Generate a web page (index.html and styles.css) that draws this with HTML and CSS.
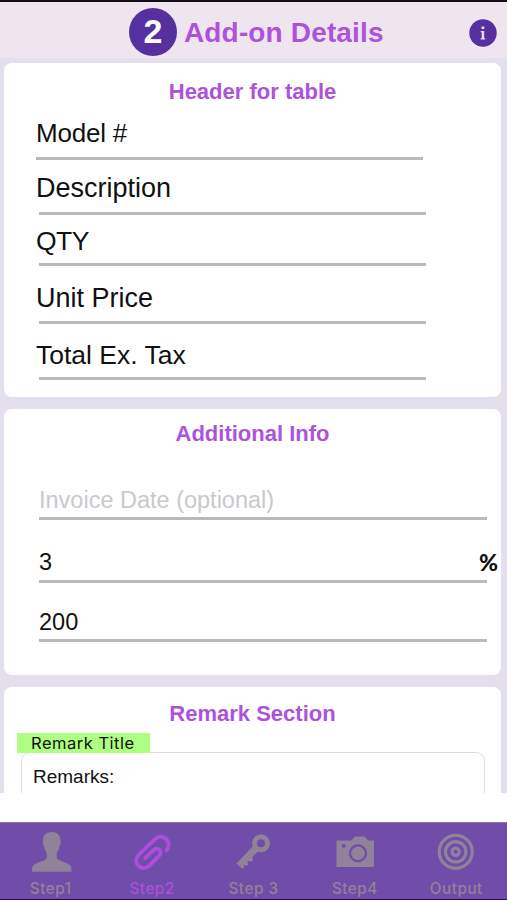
FILE: index.html
```html
<!DOCTYPE html>
<html lang="en">
<head>
<meta charset="utf-8">
<title>Add-on Details</title>
<link rel="stylesheet" href="styles.css">
</head>
<body>
<header class="header">
  <div class="heading"><span class="step-number">2</span><h1>Add-on Details</h1></div>
  <svg class="info" viewBox="0 0 28 28"><circle cx="14" cy="14" r="13.700" fill="#55309e"/><path d="M12.500 7.500h2.800v2.600h-2.800zM11.700 12h3.500v7.300h1v1.200h-4.600v-1.200h1.100v-6h-1z" fill="#e9dcf1"/></svg>
</header>
<main class="content">
  <section class="card table-card">
    <h2>Header for table</h2>
    <div class="field model"><span>Model #</span></div>
    <div class="field description"><span>Description</span></div>
    <div class="field qty"><span>QTY</span></div>
    <div class="field price"><span>Unit Price</span></div>
    <div class="field total"><span>Total Ex. Tax</span></div>
  </section>
  <section class="card info-card">
    <h2>Additional Info</h2>
    <div class="entry date"><span>Invoice Date (optional)</span></div>
    <div class="entry rate"><span>3</span><b class="percent">%</b></div>
    <div class="entry amount"><span>200</span></div>
  </section>
  <section class="card remark-card">
    <h2>Remark Section</h2>
    <div class="remark-title"><span>Remark Title</span></div>
    <div class="remark-box"><span>Remarks:</span></div>
  </section>
</main>
<nav class="tabs">
  <div class="tab">
    <svg viewBox="0 0 44 44"><path fill="currentColor" d="M22.500 2c5.500 0 9 3 9 8.500 .6 1.500 .2 4-.9 5.500-.5 3.500-1.800 5.500-2.800 7v5c1.500 2.500 7 3.800 11 5.700 3 1.300 3.700 3 3.700 8H3.100c0-5 .7-6.700 3.700-8 4-1.900 9.500-3.200 11-5.700v-5c-1-1.500-2.300-3.500-2.800-7-1.100-1.500-1.500-4-.9-5.500C14.100 5 17 2 22.500 2z"/></svg>
    <span>Step1</span>
  </div>
  <div class="tab active">
    <svg viewBox="0 0 44 44"><path fill="none" stroke="currentColor" stroke-width="3.900" stroke-linecap="round" stroke-linejoin="round" d="M36.700 20.300c2.600-4 2.600-8-.3-11.100-3.200-3.400-8-3.300-11.400 0L9.300 24.200c-3.400 3.400-4.100 8-1.200 11.300 3 3.300 8 3.200 11.300 0l9.400-9.300c2.300-2.300 2.300-4.800 .7-6.400-1.600-1.600-4.100-1.400-6 .3l-8.300 8"/></svg>
    <span>Step2</span>
  </div>
  <div class="tab">
    <svg viewBox="0 0 44 44"><circle cx="30" cy="13.300" r="6.500" fill="none" stroke="currentColor" stroke-width="5"/><path fill="currentColor" d="M21.800 16.200 27 21.400l-6 6 1.200 2.400-2.400 2.200-1.800-1.300-1.600 1.500 .8 2.200-1.900 1.700-2-1.300-.8 1 .8 1.700-1.800 1.600-6-5.500z"/></svg>
    <span>Step 3</span>
  </div>
  <div class="tab">
    <svg viewBox="0 0 44 44"><path fill="currentColor" fill-rule="evenodd" d="M3.500 10.500h15c1.500-1.500 2-4 5-4h6.500c3 0 3.500 2.500 5 4h6v26.500h-37.500zM9 14.300v3.200h3.500v-3.200zM25 14.300a9 9 0 1 0 .01 0z"/><circle cx="25" cy="23.300" r="6.800" fill="currentColor"/></svg>
    <span>Step4</span>
  </div>
  <div class="tab">
    <svg viewBox="0 0 44 44"><g fill="none" stroke="currentColor" stroke-width="3.200"><circle cx="21.700" cy="21.800" r="16.500"/><circle cx="21.700" cy="21.800" r="10.200"/><circle cx="21.700" cy="21.800" r="3.600"/></g></svg>
    <span>Output</span>
  </div>
</nav>
</body>
</html>
```

FILE: styles.css
```css
* { box-sizing: border-box; }
body {
  margin: 0;
  height: 900px;
  display: flex;
  flex-direction: column;
  background: #fff;
  color: #111;
  font-family: "Liberation Sans", Arial, sans-serif;
  overflow: hidden;
}
h1, h2 { margin: 0; color: #ad52db; font-weight: bold; }
.header {
  height: 58px;
  flex: none;
  border-top: 2px solid #150b19;
  background: #eee5ee;
  display: flex;
  justify-content: space-between;
  padding: 0 10px 0 129px;
}
.heading { display: flex; gap: 7px; padding-top: 6px; }
.step-number {
  width: 48px;
  height: 48px;
  border-radius: 50%;
  background: #55309e;
  color: #fff;
  font: bold 34px/46px "Liberation Sans", Arial, sans-serif;
  text-align: center;
}
h1 { font-size: 28px; line-height: 49px; letter-spacing: 0.15px; white-space: nowrap; }
.info { width: 28px; height: 28px; margin-top: 17px; }
.content {
  height: 735px;
  flex: none;
  padding: 5px 6px 0 4px;
  background: #e4dfec;
  display: flex;
  flex-direction: column;
  gap: 12px;
  overflow: hidden;
}
.card { background: #fff; border-radius: 8px; flex: none; }
h2 { font-size: 22px; line-height: 26px; text-align: center; }
.table-card { height: 334px; padding: 16px 75px 0 35px; }
.table-card h2 { margin: 0 -75px 0 -35px; }
.field {
  display: flex;
  align-items: flex-end;
  border-bottom: 3px solid #bababa;
  font-size: 26.5px;
  line-height: 30px;
  white-space: nowrap;
}
.table-card .field span { margin-left: -3px; }
.table-card .model { height: 55px; margin: 0 3px 0 -3px; padding-bottom: 9px; font-size: 26px; }
.table-card .model span { margin-left: 0; letter-spacing: -0.2px; }
.description { height: 55px; padding-bottom: 9px; font-size: 27px; }
.qty { height: 51px; padding-bottom: 7px; letter-spacing: -0.5px; }
.price { height: 58px; padding-bottom: 8px; font-size: 27px; }
.total { height: 56px; padding-bottom: 7px; }
.info-card { height: 266px; padding: 12px 14px 0 35px; }
.info-card h2 { margin: 0 -14px 0 -35px; }
.entry {
  display: flex;
  justify-content: space-between;
  align-items: flex-end;
  border-bottom: 3px solid #bababa;
  font-size: 23.5px;
  line-height: 26px;
}
.date { height: 73px; padding-bottom: 4px; color: #c9c9cd; }
.rate { height: 63px; padding-bottom: 5px; }
.amount { height: 59px; padding-bottom: 4px; }
.percent { font: 900 23px/26px Lato, sans-serif; margin-right: -11px; }
.remark-card { height: 170px; padding: 14px 16px 0 13px; }
.remark-card h2 { margin: 0 -16px 0 -13px; }
.remark-title {
  position: relative;
  width: 133px;
  height: 20px;
  margin-top: 6px;
  padding-left: 14px;
  background: #aeff82;
  font: 16.5px/21px Inter, sans-serif;
  letter-spacing: 0.5px;
  white-space: nowrap;
}
.remark-box {
  height: 100px;
  margin: -1px 0 0 4px;
  padding: 12px 11px;
  border: 1px solid #dedee0;
  border-radius: 9px;
  font-size: 19px;
  line-height: 23px;
}
.tabs {
  height: 78px;
  margin-top: 29px;
  flex: none;
  display: grid;
  grid-template-columns: repeat(5, 1fr);
  background: #6f4da8;
  border-top: 1px solid #8c72b5;
  border-bottom: 1px solid #260743;
  color: #8f8299;
}
.tab {
  display: flex;
  flex-direction: column;
  align-items: center;
  padding-top: 7px;
  font: 500 15.3px/18px Inter, sans-serif;
  letter-spacing: 0.5px;
}
.tab svg { width: 44px; height: 44px; margin-bottom: 6px; }
.active { color: #ae4ddb; }
```
